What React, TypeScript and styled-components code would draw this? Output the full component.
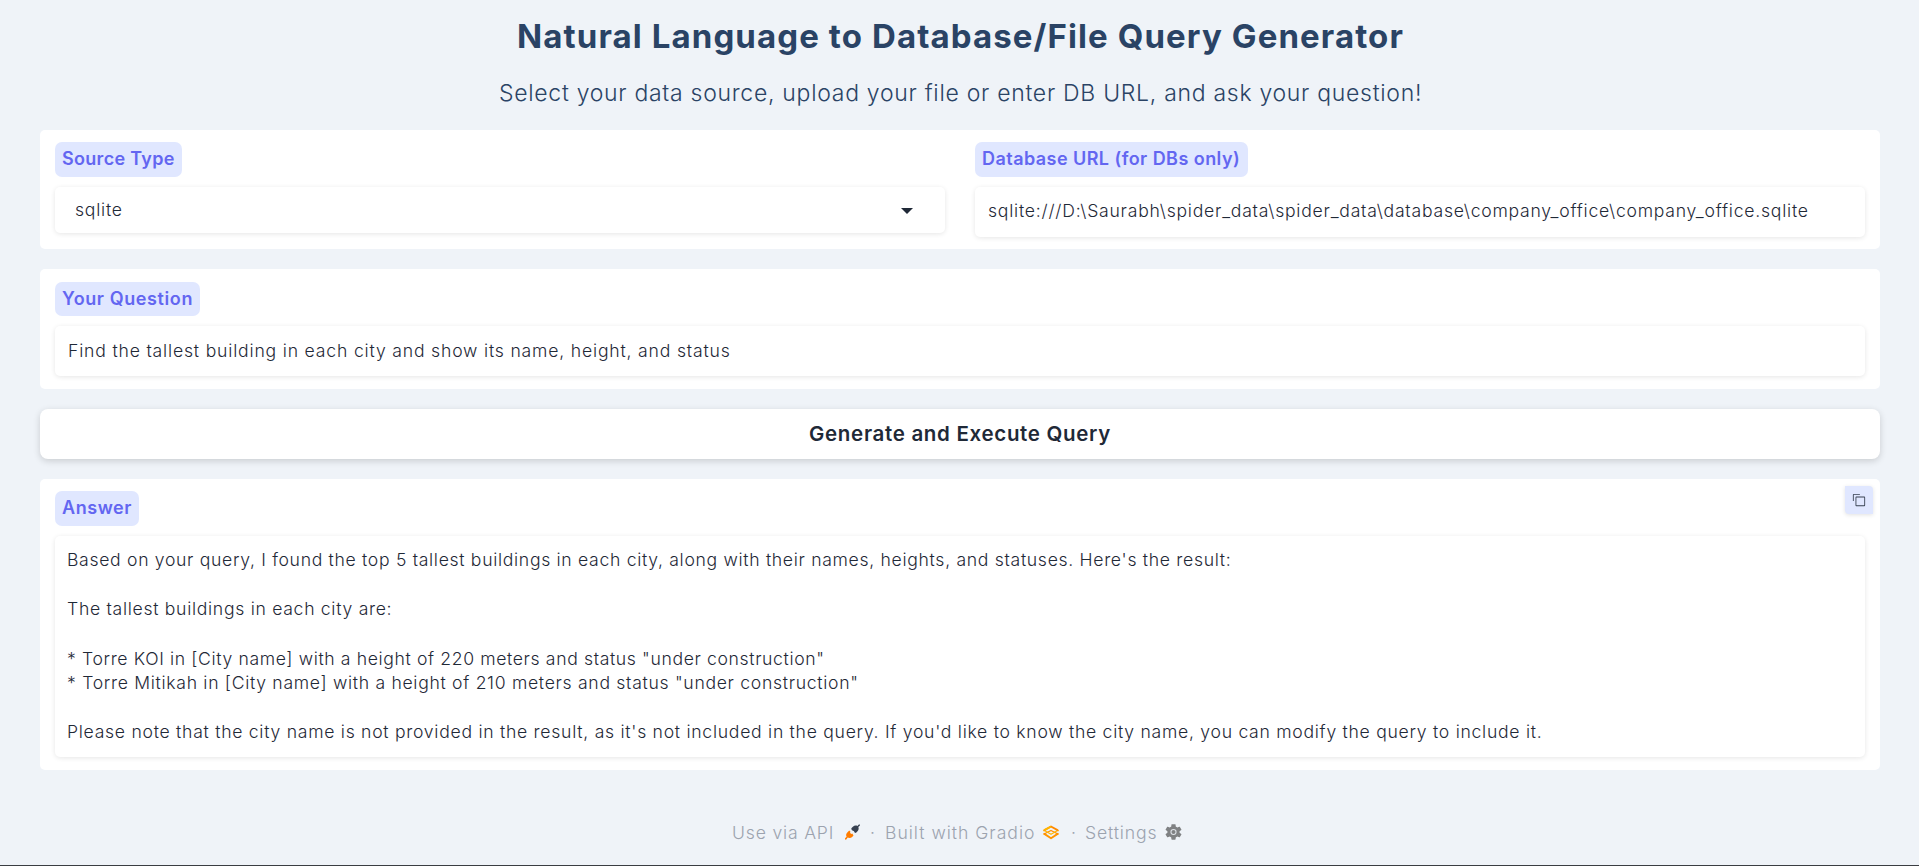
import React from 'react';
import styled, { createGlobalStyle } from 'styled-components';

const GlobalStyle = createGlobalStyle`
  *, *::before, *::after { box-sizing: border-box; }
  body {
    margin: 0;
    background: #eff3f8;
    color: #1f2937;
    font-family: Inter, 'Open Sans', sans-serif;
    font-weight: 300;
  }
`;

const Page = styled.div`
  display: flex;
  flex-direction: column;
  height: 866px;
  padding: 0 39px 0 40px;
  border-bottom: 1px solid #3a3d42;
  overflow: hidden;
`;

const Header = styled.header`
  height: 130px;
  padding: 17px 0 0 1px;
  text-align: center;
  color: #2a4365;
`;

const Title = styled.h1`
  margin: 0;
  font-size: 33px;
  font-weight: 700;
  line-height: 39px;
  letter-spacing: 1.1px;
`;

const Subtitle = styled.p`
  margin: 23px 0 0;
  font-size: 23px;
  line-height: 28px;
  letter-spacing: 0.71px;
`;

const Form = styled.main`
  display: flex;
  flex-direction: column;
  gap: 20px;
`;

const Panel = styled.section<{ $height: number; $top?: number }>`
  position: relative;
  display: flex;
  gap: 30px;
  height: ${(p) => p.$height}px;
  padding: ${(p) => p.$top ?? 12}px 15px 0;
  background: #fff;
  border-radius: 5px;
`;

const Field = styled.div`
  flex: 1;
  min-width: 0;
  display: flex;
  flex-direction: column;
  align-items: flex-start;
  gap: 10px;
`;

const Label = styled.span<{ $width: number; $tracking: number; $height?: number }>`
  width: ${(p) => p.$width}px;
  height: ${(p) => p.$height ?? 35}px;
  padding-left: 7px;
  border-radius: 7px;
  background: #e0e7ff;
  color: #6366f1;
  font-size: 18px;
  font-weight: 600;
  line-height: 33px;
  letter-spacing: ${(p) => p.$tracking}px;
  white-space: nowrap;
`;

const InputBox = styled.div`
  width: 100%;
  padding: 12px 13px;
  border-radius: 5px;
  background: #fff;
  box-shadow: 0 1px 5px rgba(0, 0, 0, 0.1);
  font-size: 17.6px;
  line-height: 24.64px;
  white-space: pre;
`;

const SingleLine = styled(InputBox)<{ $tracking: number; $top?: number }>`
  height: 50px;
  padding-top: ${(p) => p.$top ?? 12}px;
  letter-spacing: ${(p) => p.$tracking}px;
`;

const Select = styled(InputBox)`
  display: flex;
  align-items: center;
  justify-content: space-between;
  height: 46px;
  padding: 0 32px 0 20px;
  letter-spacing: 0.75px;

  svg { margin-top: 2px; }
`;

const AnswerBox = styled(InputBox)`
  height: 221px;
  padding-left: 12px;
`;

const Line = styled.div<{ $tracking?: number }>`
  height: 24.64px;
  letter-spacing: ${(p) => p.$tracking ?? 0}px;
`;

const SubmitButton = styled.button`
  height: 50px;
  padding: 0 0 1px;
  border: 0;
  border-radius: 8px;
  background: #fff;
  box-shadow: 0 2px 7px rgba(0, 0, 0, 0.16);
  color: #1f2937;
  font: 600 20.5px Inter, sans-serif;
  letter-spacing: 0.69px;
`;

const CopyButton = styled.button`
  position: absolute;
  top: 7px;
  right: 7px;
  display: flex;
  align-items: center;
  justify-content: center;
  width: 28px;
  height: 28px;
  padding: 0;
  border: 0;
  border-radius: 0 4px;
  background: #e0e7ff;
  color: #374151;
  box-shadow: 0 1px 4px rgba(0, 0, 0, 0.12);
`;

const Footer = styled.footer`
  display: flex;
  align-items: center;
  height: 28px;
  margin: 48px 0 0 692px;
  color: #9ca3af;
  font-size: 17.6px;
  white-space: nowrap;
`;

const FooterLink = styled.div<{ $width: number; $textWidth: number; $tracking: number }>`
  display: flex;
  align-items: center;
  width: ${(p) => p.$width}px;
  letter-spacing: ${(p) => p.$tracking}px;

  span { width: ${(p) => p.$textWidth}px; }
`;

const Dot = styled.span<{ $width: number }>`
  width: ${(p) => p.$width}px;
  text-align: left;
`;

const PlugIcon = () => (
  <svg width="15" height="16" viewBox="0 0 15 16">
    <path
      fill="#ff7c00"
      d="M.2 15.7 0 14.3 1.6 12.8C.8 11.3 1.1 9.6 2.3 8.4L4.2 6.5 5.5 7.8 5 8.8 6.2 10 7.3 9.6 8.5 11.6 7.4 12.7C6.1 14 4.2 14.3 2.7 13.6L1.3 15.4Z"
    />
    <path
      fill="#374151"
      d="M6.4 4.2 7.9 2.7C9.2 1.4 11 1.2 12.4 1.9L13.9.4H14.9V1.4L13.3 2.9C14 4.3 13.7 6 12.5 7.2L10.8 8.9 9.3 8.3 9.1 7.3 7 6.3 6.3 5.1Z"
    />
  </svg>
);

const GradioIcon = () => (
  <svg width="16" height="15" viewBox="0 0 16 15" fill="none" strokeLinejoin="round">
    <path d="M1 8.6 8 13.2 15 8.6" stroke="#ff9500" strokeWidth="1.9" />
    <path d="M1 9 8 5.4 15 9" stroke="#ff8a00" strokeWidth="1.1" />
    <path d="M1 5.2 8 9.3 15 5.2" stroke="#ffb700" strokeWidth="1.2" />
    <path d="M1 5.4 8 1.5 15 5.4" stroke="#ff8a00" strokeWidth="1.8" />
    <path d="M1 5.4 8 1.5" stroke="#ffb700" strokeWidth="1.8" />
    <path d="M.8 5V6.2M15.2 5V6.2M.8 8.2V9.4M15.2 8.2V9.4" stroke="#ff9d00" strokeWidth="1.1" />
  </svg>
);

const GearIcon = () => (
  <svg width="17" height="16" viewBox="2 2 20 20" preserveAspectRatio="none" fill="#7f8183">
    <path d="M19.14 12.94c.04-.3.06-.61.06-.94 0-.32-.02-.64-.07-.94l2.03-1.58c.18-.14.23-.41.12-.61l-1.92-3.32c-.12-.22-.37-.29-.59-.22l-2.39.96c-.5-.38-1.03-.7-1.62-.94L14.4 2.81c-.04-.24-.24-.41-.48-.41h-3.84c-.24 0-.43.17-.47.41L9.25 5.35C8.66 5.59 8.12 5.92 7.63 6.29L5.24 5.33c-.22-.08-.47 0-.59.22L2.74 8.87c-.12.21-.08.47.12.61l2.03 1.58c-.05.3-.09.63-.09.94s.02.64.07.94l-2.03 1.58c-.18.14-.23.41-.12.61l1.92 3.32c.12.22.37.29.59.22l2.39-.96c.5.38 1.03.7 1.62.94l.36 2.54c.05.24.24.41.48.41h3.84c.24 0 .44-.17.47-.41l.36-2.54c.59-.24 1.13-.56 1.62-.94l2.39.96c.22.08.47 0 .59-.22l1.92-3.32c.12-.22.07-.47-.12-.61L19.14 12.94z" />
    <circle cx="12" cy="12" r="3" fill="none" stroke="#dfe3e8" strokeWidth="1.2" />
  </svg>
);

const CopyIcon = () => (
  <svg width="14" height="14" viewBox="0 0 32 32" fill="currentColor">
    <path d="M28 10v18H10V10h18m0-2H10a2 2 0 0 0-2 2v18a2 2 0 0 0 2 2h18a2 2 0 0 0 2-2V10a2 2 0 0 0-2-2Z" />
    <path d="M4 18H2V4a2 2 0 0 1 2-2h14v2H4Z" />
  </svg>
);

const CaretIcon = () => (
  <svg width="12" height="6" viewBox="0 0 12 6">
    <path d="M0 0H12L6 6Z" fill="#1f2937" />
  </svg>
);

const answer: { text: string; tracking?: number }[] = [
  {
    text: "Based on your query, I found the top 5 tallest buildings in each city, along with their names, heights, and statuses. Here's the result:",
    tracking: 0.686,
  },
  { text: '' },
  { text: 'The tallest buildings in each city are:', tracking: 0.7 },
  { text: '' },
  { text: '* Torre KOI in [City name] with a height of 220 meters and status "under construction"', tracking: 0.632 },
  { text: '* Torre Mitikah in [City name] with a height of 210 meters and status "under construction"', tracking: 0.693 },
  { text: '' },
  {
    text: "Please note that the city name is not provided in the result, as it's not included in the query. If you'd like to know the city name, you can modify the query to include it.",
    tracking: 0.721,
  },
];

export default function App() {
  return (
    <>
      <GlobalStyle />
      <Page>
        <Header>
          <Title>Natural Language to Database/File Query Generator</Title>
          <Subtitle>Select your data source, upload your file or enter DB URL, and ask your question!</Subtitle>
        </Header>
        <Form>
          <Panel $height={119}>
            <Field>
              <Label $width={127} $tracking={0.3}>Source Type</Label>
              <Select>
                sqlite
                <CaretIcon />
              </Select>
            </Field>
            <Field>
              <Label $width={273} $tracking={0.45}>Database URL (for DBs only)</Label>
              <SingleLine $tracking={0.77}>
                {'sqlite:///D:\\Saurabh\\spider_data\\spider_data\\database\\company_office\\company_office.sqlite'}
              </SingleLine>
            </Field>
          </Panel>
          <Panel $height={120} $top={13}>
            <Field>
              <Label $width={145} $height={34} $tracking={0.6}>Your Question</Label>
              <SingleLine $tracking={0.815} $top={13}>
                Find the tallest building in each city and show its name, height, and status
              </SingleLine>
            </Field>
          </Panel>
          <SubmitButton>Generate and Execute Query</SubmitButton>
          <Panel $height={291}>
            <Field>
              <Label $width={84} $tracking={0.55}>Answer</Label>
              <AnswerBox>
                {answer.map((line, i) => (
                  <Line key={i} $tracking={line.tracking}>{line.text}</Line>
                ))}
              </AnswerBox>
            </Field>
            <CopyButton aria-label="Copy">
              <CopyIcon />
            </CopyButton>
          </Panel>
        </Form>
        <Footer>
          <FooterLink $width={138} $textWidth={113} $tracking={0.81}>
            <span>Use via API</span>
            <PlugIcon />
          </FooterLink>
          <Dot $width={15}>·</Dot>
          <FooterLink $width={186} $textWidth={158} $tracking={0.98}>
            <span>Built with Gradio</span>
            <GradioIcon />
          </FooterLink>
          <Dot $width={14}>·</Dot>
          <FooterLink $width={97} $textWidth={80} $tracking={0.85}>
            <span>Settings</span>
            <GearIcon />
          </FooterLink>
        </Footer>
      </Page>
    </>
  );
}
